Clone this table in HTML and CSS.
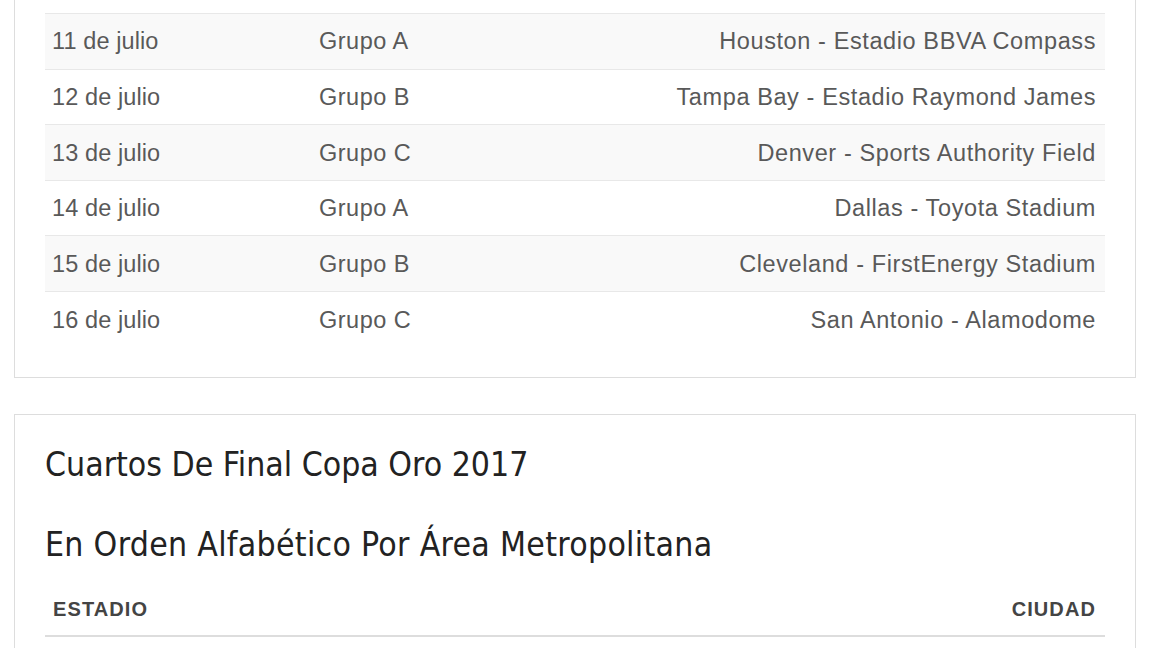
FILE: index.html
```html
<!DOCTYPE html>
<html lang="es">
<head>
<meta charset="utf-8">
<title>Copa Oro 2017</title>
<link rel="stylesheet" href="styles.css">
</head>
<body>
<main class="page">
  <section class="card card-first">
    <table class="sched">
      <tbody>
        <tr><td class="c-date">10 de julio</td><td class="c-group">Grupo C</td><td class="c-venue">Glendale - University of Phoenix Stadium</td></tr>
        <tr class="alt"><td class="c-date">11 de julio</td><td class="c-group">Grupo A</td><td class="c-venue">Houston - Estadio BBVA Compass</td></tr>
        <tr><td class="c-date">12 de julio</td><td class="c-group">Grupo B</td><td class="c-venue">Tampa Bay - Estadio Raymond James</td></tr>
        <tr class="alt"><td class="c-date">13 de julio</td><td class="c-group">Grupo C</td><td class="c-venue">Denver - Sports Authority Field</td></tr>
        <tr><td class="c-date">14 de julio</td><td class="c-group">Grupo A</td><td class="c-venue">Dallas - Toyota Stadium</td></tr>
        <tr class="alt"><td class="c-date">15 de julio</td><td class="c-group">Grupo B</td><td class="c-venue">Cleveland - FirstEnergy Stadium</td></tr>
        <tr><td class="c-date">16 de julio</td><td class="c-group">Grupo C</td><td class="c-venue">San Antonio - Alamodome</td></tr>
      </tbody>
    </table>
  </section>
  <section class="card">
    <h2 class="title">Cuartos De Final Copa Oro 2017</h2>
    <h3 class="subtitle">En Orden Alfabético Por Área Metropolitana</h3>
    <table class="sched">
      <thead>
        <tr><th class="h-left">Estadio</th><th class="h-right">Ciudad</th></tr>
      </thead>
    </table>
  </section>
</main>
</body>
</html>
```
FILE: styles.css
```css
html, body {
  margin: 0;
  padding: 0;
  background: #fff;
}
.page {
  display: flex;
  flex-direction: column;
  gap: 36px;
  padding: 0 16px 0 14px;
  font-family: "Liberation Sans", Arial, sans-serif;
  color: #595959;
}
.card {
  border: 1px solid #ddd;
  padding: 30px 30px 30px 30px;
  background: #fff;
}
.card-first {
  margin-top: -73px;
}
.sched {
  width: 100%;
  border-collapse: collapse;
}
.sched td {
  font-size: 23.5px;
  letter-spacing: 0.1px;
  line-height: 30px;
  height: 55.6px;
  padding: 0 9px 0 7px;
  box-sizing: border-box;
  vertical-align: middle;
}
.sched tbody tr + tr td {
  border-top: 1px solid #e8e8e8;
}
.sched tr.alt td {
  background: #f9f9f9;
}
.c-date { width: 267px; }
.sched td.c-group { width: 220px; letter-spacing: 0.5px; }
.sched td.c-venue { text-align: right; letter-spacing: 0.6px; }
.title, .subtitle {
  font-family: "DejaVu Sans Condensed", "Liberation Sans Narrow", "Roboto Condensed", sans-serif;
  font-stretch: condensed;
  font-weight: normal;
  color: #222;
  font-size: 33.5px;
  line-height: 40px;
  margin: 0 0 40px;
}
.subtitle {
  margin-bottom: 32px;
  letter-spacing: 0.3px;
}
.sched th {
  font-size: 20px;
  letter-spacing: 1.1px;
  font-weight: bold;
  text-transform: uppercase;
  color: #444;
  line-height: 24px;
  padding: 0 9px 14px 8px;
  border-bottom: 2px solid #ddd;
}
.h-left { text-align: left; }
.h-right { text-align: right; }
```
